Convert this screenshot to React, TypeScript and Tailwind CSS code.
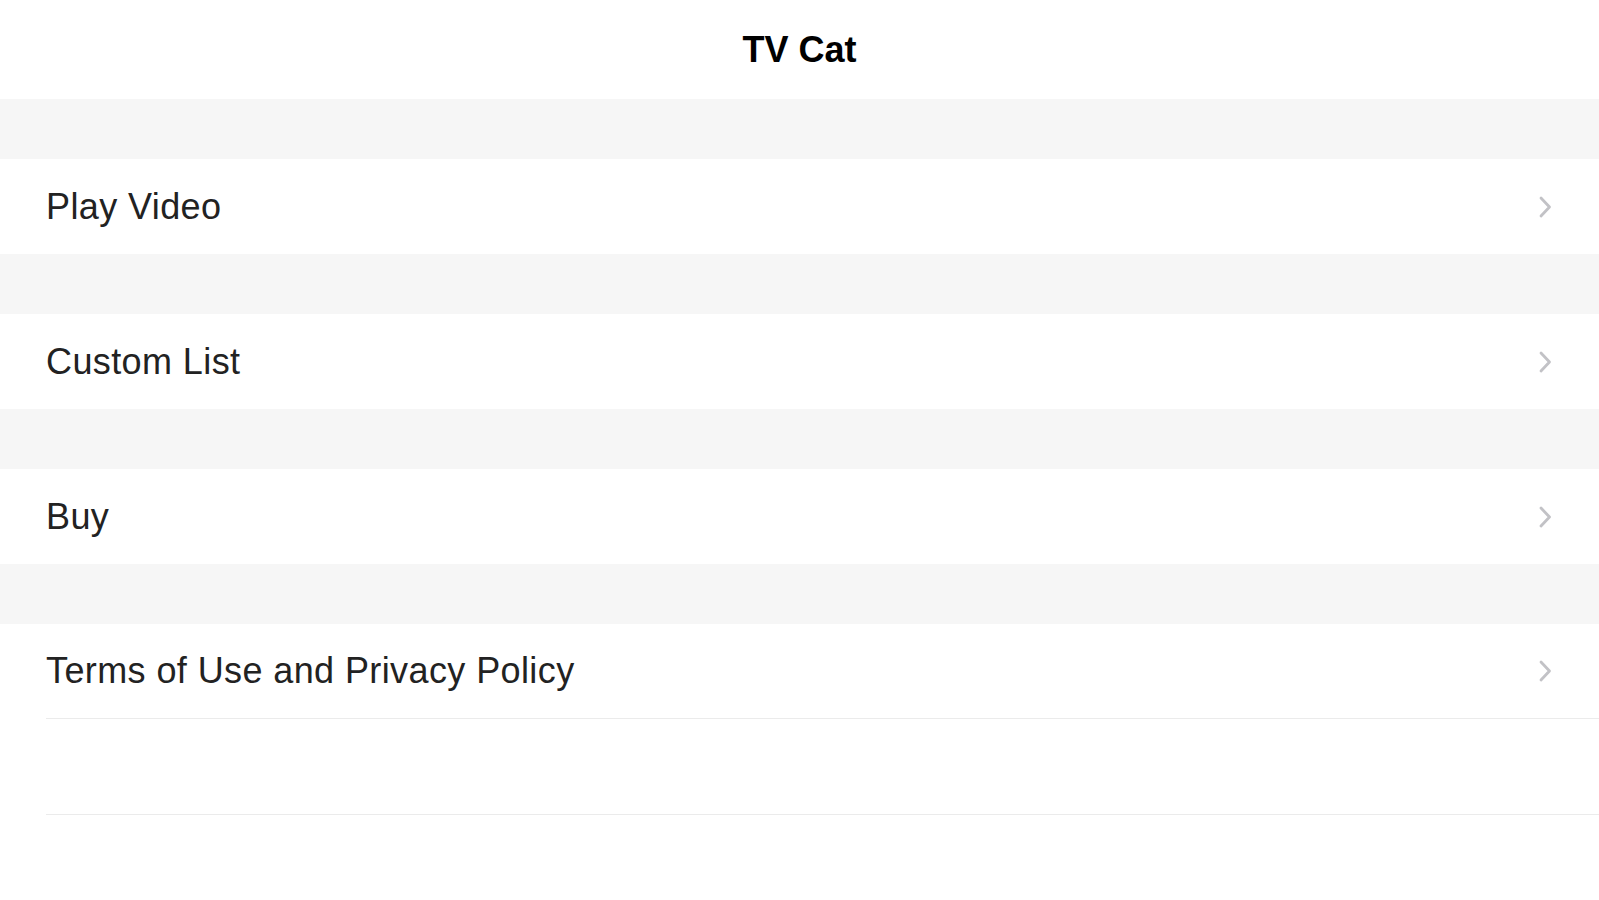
const items = ['Play Video', 'Custom List', 'Buy', 'Terms of Use and Privacy Policy'];

function Chevron() {
  return (
    <svg width="16" height="26" viewBox="0 0 16 26" fill="none" className="shrink-0">
      <path d="M4 4l8.5 9-8.5 9" stroke="#c2c2c6" strokeWidth="2.8" strokeLinecap="round" strokeLinejoin="round" />
    </svg>
  );
}

export default function App() {
  return (
    <div
      className="flex h-[900px] w-full flex-col overflow-hidden bg-white text-[#222222]"
      style={{ fontFamily: '"Liberation Sans", Arial, sans-serif' }}
    >
      <header className="flex h-[99px] shrink-0 items-center justify-center">
        <h1 className="text-[36px] font-bold text-black">TV Cat</h1>
      </header>

      {items.map((label, i) => (
        <div key={label}>
          <div className="h-[60px] bg-[#f6f6f6]" />
          <div className={i === items.length - 1 ? 'pl-[46px]' : ''}>
            <div
              className={`flex h-[95px] items-center justify-between pr-[46px] ${
                i === items.length - 1 ? 'border-b border-[#ebebeb]' : 'pl-[46px]'
              }`}
            >
              <span className="text-[36px] leading-none tracking-[0.4px]">{label}</span>
              <Chevron />
            </div>
          </div>
        </div>
      ))}

      <div className="pl-[46px]">
        <div className="h-[96px] border-b border-[#ebebeb]" />
        <div className="h-[96px] border-b border-[#ebebeb]" />
      </div>
    </div>
  );
}
